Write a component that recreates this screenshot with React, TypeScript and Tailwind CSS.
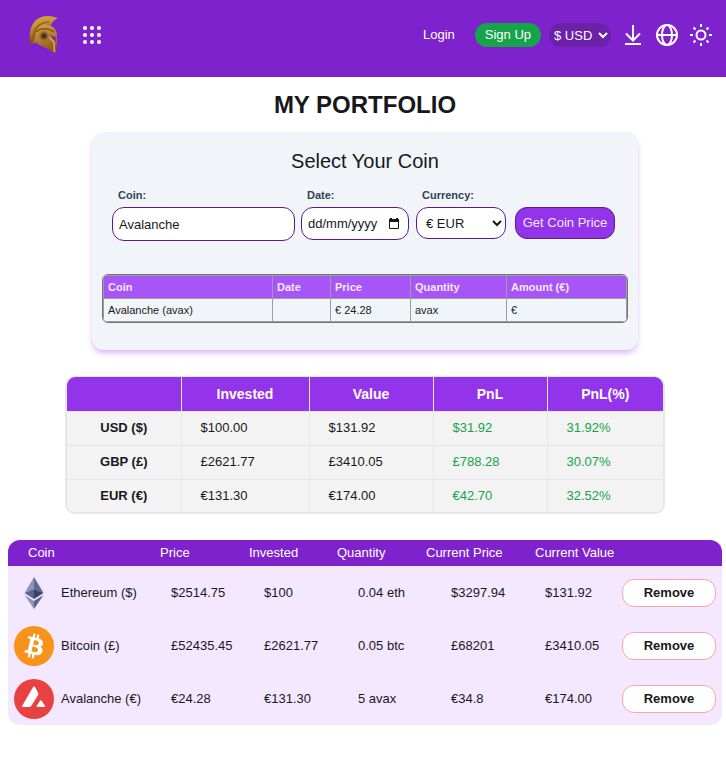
import React from "react";

const summary = [
  { label: "USD ($)", invested: "$100.00", value: "$131.92", pnl: "$31.92", pct: "31.92%" },
  { label: "GBP (£)", invested: "£2621.77", value: "£3410.05", pnl: "£788.28", pct: "30.07%" },
  { label: "EUR (€)", invested: "€131.30", value: "€174.00", pnl: "€42.70", pct: "32.52%" },
];

function HelmetLogo() {
  return (
    <svg width="30" height="40" viewBox="0 0 30 40" aria-hidden="true">
      <defs>
        <linearGradient id="crest" x1="0" y1="0" x2="0.2" y2="1">
          <stop offset="0" stopColor="#d9a847" />
          <stop offset="0.45" stopColor="#c08a32" />
          <stop offset="1" stopColor="#70430f" />
        </linearGradient>
        <linearGradient id="dome" x1="0" y1="0" x2="0.3" y2="1">
          <stop offset="0" stopColor="#d8a546" />
          <stop offset="0.5" stopColor="#b98230" />
          <stop offset="1" stopColor="#8f5c1b" />
        </linearGradient>
      </defs>
      <path d="M1 30C0 18 1 11 7 5C13 0 21 0 29 3C25 5 23 7 22 10C15 8 10 12 8 18C6.500 24 6 28 1 30Z" fill="url(#crest)" />
      <path d="M4 25C4 15 9 8 20 7" fill="none" stroke="#8f5e1c" strokeWidth="1.500" />
      <path d="M7 18C9 12 13 9 18 9.500C23 10 27 14 28 19L28 31L26.500 31L27 38.500L22 36C20 33 16 33 13 31C10 30 8 29 7 27L3 29C6 26 6 22 7 18Z" fill="url(#dome)" />
      <path d="M7 17C12 12.500 20 13 25 17" fill="none" stroke="#85551a" strokeWidth="1.500" />
      <path d="M21 20L27 22L26.500 27Z" fill="#7e22ce" />
      <path d="M20 22L25 27L25.500 37" fill="none" stroke="#d9a851" strokeWidth="1.500" />
      <circle cx="15" cy="21" r="5" fill="#a87228" />
      <circle cx="15" cy="21" r="3.500" fill="#77502a" />
      <circle cx="15" cy="21" r="2" fill="#33302c" />
    </svg>
  );
}

function EthereumLogo() {
  return (
    <svg width="40" height="40" viewBox="0 0 40 40" aria-hidden="true">
      <path d="M20 4L10.500 20L20 16Z" fill="#8c94b5" />
      <path d="M20 4L29.500 20L20 16Z" fill="#62688f" />
      <path d="M20 16L10.500 20L20 26Z" fill="#5d648d" />
      <path d="M20 16L29.500 20L20 26Z" fill="#3c4170" />
      <path d="M10.500 22L20 28V36Z" fill="#8c94b5" />
      <path d="M29.500 22L20 28V36Z" fill="#5a6089" />
    </svg>
  );
}

function BitcoinLogo() {
  return (
    <svg width="40" height="40" viewBox="0 0 32 32" aria-hidden="true">
      <circle cx="16" cy="16" r="16" fill="#f7931a" />
      <path
        fill="#fff"
        d="M23.189 14.020c.314-2.096-1.283-3.223-3.465-3.975l.708-2.840-1.728-.430-.690 2.765c-.454-.114-.920-.220-1.385-.326l.695-2.783L15.596 6l-.708 2.839c-.376-.086-.746-.170-1.104-.260l.002-.009-2.384-.595-.460 1.846s1.283.294 1.256.312c.700.175.826.638.805 1.006l-.806 3.235c.048.012.110.030.180.057l-.183-.045-1.130 4.532c-.086.212-.303.531-.793.410.018.025-1.256-.313-1.256-.313l-.858 1.978 2.250.561c.418.105.828.215 1.231.318l-.715 2.872 1.727.430.708-2.840c.472.127.930.245 1.378.357l-.706 2.828 1.728.430.715-2.866c2.948.558 5.164.333 6.097-2.333.752-2.146-.037-3.385-1.588-4.192 1.130-.260 1.980-1.003 2.207-2.538zm-3.950 5.538c-.533 2.147-4.148.986-5.320.695l.950-3.805c1.172.293 4.929.872 4.370 3.110zm.535-5.569c-.487 1.953-3.495.960-4.470.717l.860-3.450c.975.243 4.118.696 3.610 2.733z"
      />
    </svg>
  );
}

function AvalancheLogo() {
  return (
    <svg width="40" height="40" viewBox="0 0 40 40" aria-hidden="true">
      <circle cx="20" cy="20" r="20" fill="#e84142" />
      <path d="M18.800 8.500Q20 6.500 21.200 8.500L24 13.600Q24.700 15 24 16.300L17.200 27Q16.300 28 15 28H9.500Q7.500 28 8.500 26.200Z" fill="#fff" />
      <path d="M25.800 22Q26.800 20.600 27.800 22L31 26.800Q31.500 28 30.200 28H23.500Q22.200 28 22.800 26.800Z" fill="#fff" />
    </svg>
  );
}

const holdings = [
  { Logo: EthereumLogo, coin: "Ethereum ($)", price: "$2514.75", invested: "$100", quantity: "0.04 eth", current: "$3297.94", value: "$131.92" },
  { Logo: BitcoinLogo, coin: "Bitcoin (£)", price: "£52435.45", invested: "£2621.77", quantity: "0.05 btc", current: "£68201", value: "£3410.05" },
  { Logo: AvalancheLogo, coin: "Avalanche (€)", price: "€24.28", invested: "€131.30", quantity: "5 avax", current: "€34.8", value: "€174.00" },
];

function Header() {
  return (
    <header className="flex h-[77px] items-center justify-between bg-[#7e22ce] pr-[13px] pb-[7px] pl-[29px] text-white">
      <div className="flex items-center gap-6">
        <a href="#home" aria-label="Home">
          <HelmetLogo />
        </a>
        <button type="button" aria-label="Menu">
          <svg width="18" height="18" viewBox="0 0 18 18" fill="currentColor" aria-hidden="true">
            {[2, 9, 16].map((y) => [2, 9, 16].map((x) => <circle key={`${x}-${y}`} cx={x} cy={y} r="2" />))}
          </svg>
        </button>
      </div>
      <div className="flex items-center">
        <a href="#login" className="mr-5">Login</a>
        <button type="button" className="mr-2 h-6 rounded-full bg-[#16a34a] px-[10px]">Sign Up</button>
        <select aria-label="Display currency" className="mr-[10px] h-6 w-[62px] rounded-full bg-[#6b21a8] pl-px">
          <option>$ USD</option>
        </select>
        <div className="flex items-center gap-[10px]">
          <button type="button" aria-label="Download">
            <svg width="24" height="24" viewBox="0 0 24 24" fill="none" stroke="currentColor" strokeWidth="2" aria-hidden="true">
              <path d="M12 2V17M5 10.500L12 17.500L19 10.500M4 21H20" />
            </svg>
          </button>
          <button type="button" aria-label="Language">
            <svg width="24" height="24" viewBox="0 0 24 24" fill="none" stroke="currentColor" strokeWidth="2" aria-hidden="true">
              <circle cx="12" cy="12" r="10" />
              <ellipse cx="12" cy="12" rx="5" ry="10" />
              <path d="M2 12H22" />
            </svg>
          </button>
          <button type="button" aria-label="Theme">
            <svg width="24" height="24" viewBox="0 0 24 24" fill="none" stroke="currentColor" strokeWidth="2" aria-hidden="true">
              <circle cx="12" cy="12" r="4.500" />
              <path d="M12 1V4M12 20V23M1 12H4M20 12H23M4.500 4.500L6.500 6.500M17.500 17.500L19.500 19.500M4.500 19.500L6.500 17.500M17.500 6.500L19.500 4.500" />
            </svg>
          </button>
        </div>
      </div>
    </header>
  );
}

function CoinForm() {
  const label = "block pl-[6px] text-[11px] leading-4 font-bold text-[#334155]";
  const field = "rounded-xl border border-[#581c87] bg-white";
  const th = "border border-[#9f9f9f] px-1 text-left font-bold text-[#f3e8ff]";
  const td = "border border-[#9f9f9f] px-1";
  return (
    <section className="mx-auto w-[546px] max-w-full rounded-xl bg-[#f1f5f9] px-[10px] pt-[15px] pb-[27px] shadow-[0_4px_6px_-1px_#d8b4fe]">
      <h2 className="text-center text-[20px] leading-7">Select Your Coin</h2>
      <form className="mt-3 flex items-start pr-[13px] pl-[10px]" onSubmit={(e) => e.preventDefault()}>
        <div className="mr-[6px] min-w-0 flex-1">
          <label htmlFor="coin" className={label}>Coin:</label>
          <input id="coin" defaultValue="Avalanche" className={`${field} mt-1 h-[34px] w-full px-[6px]`} />
        </div>
        <div className="mr-[7px] w-[108px]">
          <label htmlFor="date" className={label}>Date:</label>
          <div className={`${field} mt-1 flex h-[33px] items-center pr-2 pl-[6px]`}>
            <input id="date" placeholder="dd/mm/yyyy" className="min-w-0 flex-1 placeholder:text-[#18181b]" />
            <svg width="12" height="12" viewBox="0 0 12 12" aria-hidden="true">
              <path d="M1.500 2H10.500V10.500H1.500Z" fill="none" stroke="#18181b" />
              <path d="M1 1H2V0H4V1H8V0H10V1H11V4H1Z" fill="#18181b" />
            </svg>
          </div>
        </div>
        <div className="mr-[9px] w-[90px]">
          <label htmlFor="currency" className={label}>Currency:</label>
          <select id="currency" className={`${field} mt-1 h-8 w-full px-[5px]`}>
            <option>€ EUR</option>
          </select>
        </div>
        <button type="submit" className="mt-5 h-8 w-[100px] rounded-xl border border-[#581c87] bg-[#9333ea] text-[#f3e8ff]">
          Get Coin Price
        </button>
      </form>
      <div className="mt-[33px] overflow-hidden rounded-md border border-[#737373]">
        <table className="w-full table-fixed border-collapse text-[11px] leading-4">
          <colgroup>
            <col className="w-[169px]" />
            <col className="w-[58px]" />
            <col className="w-[80px]" />
            <col className="w-[96px]" />
            <col />
          </colgroup>
          <thead>
            <tr className="h-[23px] bg-[#a855f7]">
              <th className={th}>Coin</th>
              <th className={th}>Date</th>
              <th className={th}>Price</th>
              <th className={th}>Quantity</th>
              <th className={th}>Amount (€)</th>
            </tr>
          </thead>
          <tbody>
            <tr className="h-[23px]">
              <td className={td}>Avalanche (avax)</td>
              <td className={td}></td>
              <td className={td}>€ 24.28</td>
              <td className={td}>avax</td>
              <td className={td}>€</td>
            </tr>
          </tbody>
        </table>
      </div>
    </section>
  );
}

function SummaryTable() {
  const head = "border-l border-[#e5e7eb] font-bold";
  const cell = "border-t border-l border-[#e5e7eb] pl-[19px]";
  return (
    <div className="mx-auto mt-[26px] w-[600px] max-w-full overflow-hidden rounded-[10px] border-2 border-t border-[#e5e7eb]">
      <table className="w-full table-fixed border-collapse bg-[#f3f3f3]">
        <colgroup>
          <col className="w-[114px]" />
          <col className="w-[128px]" />
          <col className="w-[124px]" />
          <col className="w-[114px]" />
          <col />
        </colgroup>
        <thead>
          <tr className="h-[34px] bg-[#9333ea] text-[14px] text-white">
            <th></th>
            <th className={head}>Invested</th>
            <th className={head}>Value</th>
            <th className={head}>PnL</th>
            <th className={head}>PnL(%)</th>
          </tr>
        </thead>
        <tbody>
          {summary.map((row) => (
            <tr key={row.label} className="h-[34px] last:h-[33px]">
              <th scope="row" className="border-t border-[#e5e7eb] font-bold">{row.label}</th>
              <td className={cell}>{row.invested}</td>
              <td className={cell}>{row.value}</td>
              <td className={`${cell} text-[#16a34a]`}>{row.pnl}</td>
              <td className={`${cell} text-[#16a34a]`}>{row.pct}</td>
            </tr>
          ))}
        </tbody>
      </table>
    </div>
  );
}

function Holdings() {
  return (
    <table className="mt-[26px] block overflow-hidden rounded-xl bg-[#f3e8ff]">
      <thead className="block">
        <tr className="grid h-[26px] grid-cols-[132fr_89fr_88fr_89fr_109fr_187fr] items-center bg-[#7e22ce] pl-5 text-left text-white">
          <th className="font-normal">Coin</th>
          <th className="font-normal">Price</th>
          <th className="font-normal">Invested</th>
          <th className="font-normal">Quantity</th>
          <th className="font-normal">Current Price</th>
          <th className="font-normal">Current Value</th>
        </tr>
      </thead>
      <tbody className="block">
        {holdings.map(({ Logo, ...row }) => (
          <tr key={row.coin} className="grid h-[53px] grid-cols-[157fr_93fr_94fr_93fr_94fr_77fr_94px] items-center pr-[6px] pl-[6px]">
            <td className="flex items-center gap-[7px]">
              <Logo />
              {row.coin}
            </td>
            <td>{row.price}</td>
            <td>{row.invested}</td>
            <td>{row.quantity}</td>
            <td>{row.current}</td>
            <td>{row.value}</td>
            <td>
              <button type="button" className="block h-7 w-full rounded-xl border border-[#fca5a5] bg-white font-bold">
                Remove
              </button>
            </td>
          </tr>
        ))}
      </tbody>
    </table>
  );
}

export default function App() {
  return (
    <div className="min-h-screen bg-white font-['Liberation_Sans',Arial,sans-serif] text-[13px] leading-5 text-[#18181b]">
      <Header />
      <main className="pt-3 pr-1 pb-8 pl-2">
        <h1 className="mb-[11px] text-center text-[24px] leading-8 font-bold">MY PORTFOLIO</h1>
        <CoinForm />
        <SummaryTable />
        <Holdings />
      </main>
    </div>
  );
}
